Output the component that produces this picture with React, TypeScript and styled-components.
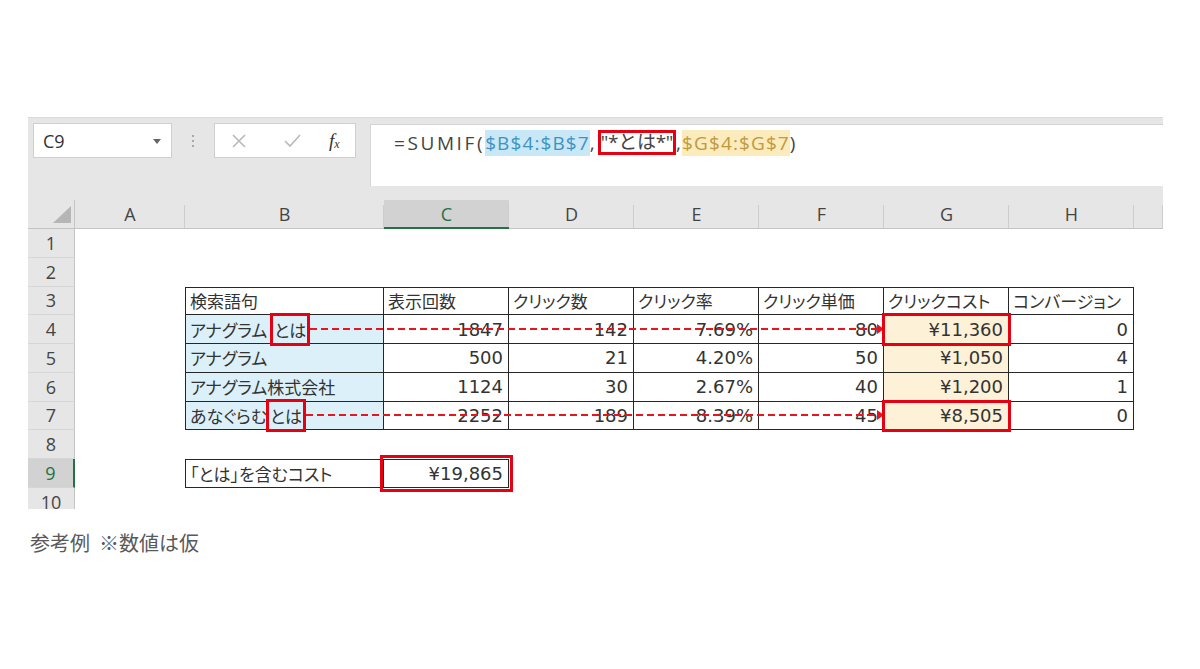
import React from 'react';
import styled, { createGlobalStyle, css } from 'styled-components';

// ページ全体の初期化
const GlobalStyle = createGlobalStyle`
  html, body {
    margin: 0;
    padding: 0;
    background: #fff;
  }
  body {
    font-family: "Open Sans", "Noto Sans CJK JP", sans-serif;
  }
`;

const Page = styled.div`
  width: 1200px;
  height: 669px;
  box-sizing: border-box;
  padding: 117px 0 0 28px;
  overflow: hidden;
`;

// Excelのスクリーンショット部分
const Excel = styled.div`
  width: 1135px;
  height: 392px;
  overflow: hidden;
  background: #e6e6e6;
  display: flex;
  flex-direction: column;
`;

const Toolbar = styled.div`
  height: 83px;
  flex: none;
  box-sizing: border-box;
  display: flex;
  align-items: flex-start;
  padding: 5px 0 0 5px;
  border-top: 1px solid #dadada;
`;

const NameBox = styled.div`
  position: relative;
  width: 139px;
  height: 35px;
  box-sizing: border-box;
  background: #fff;
  border: 1px solid #cfcfcf;
  display: flex;
  align-items: center;
  padding-left: 9px;
  font-size: 18px;
  color: #333;

  &::after {
    content: '';
    position: absolute;
    right: 10px;
    top: 15px;
    border-left: 4.5px solid transparent;
    border-right: 4.5px solid transparent;
    border-top: 5px solid #666;
  }
`;

const Grip = styled.div`
  width: 42px;
  height: 35px;
  display: flex;
  flex-direction: column;
  align-items: center;
  justify-content: center;
  gap: 3px;

  span {
    width: 2px;
    height: 2px;
    background: #a8a8a8;
  }
`;

const FxBox = styled.div`
  width: 142px;
  height: 35px;
  box-sizing: border-box;
  background: #fff;
  border: 1px solid #cfcfcf;
  display: flex;
  align-items: center;
  padding: 0 0 0 17px;
`;

const IconSlot = styled.div<{ $w: number }>`
  width: ${p => p.$w}px;
  display: flex;
  align-items: center;
`;

const FxMark = styled.span`
  font-family: "Liberation Serif", "DejaVu Serif", serif;
  font-style: italic;
  font-size: 19px;
  color: #333;

  sub {
    font-size: 12px;
    vertical-align: -1px;
  }
`;

const FormulaInput = styled.div`
  flex: 1;
  margin: 1px 0 0 14px;
  height: 62px;
  box-sizing: border-box;
  background: #fff;
  border-top: 1px solid #d4d4d4;
  border-left: 1px solid #d4d4d4;
  padding: 0 0 0 23px;
  font-size: 19px;
  letter-spacing: 1.1px;
  line-height: 36px;
  color: #444;
  white-space: nowrap;
`;

const FuncName = styled.span`
  letter-spacing: 2.6px;
`;

const Ref = styled.span<{ $tone: 'blue' | 'gold' }>`
  ${p =>
    p.$tone === 'blue'
      ? css`
          background: #c9e8f7;
          color: #3f93c2;
        `
      : css`
          background: #fcebbd;
          color: #bf9a3e;
        `}
`;

const Criteria = styled.span`
  display: inline-block;
  box-sizing: border-box;
  height: 25px;
  line-height: 19px;
  border: 3px solid #e50012;
  padding: 0;
  margin-left: 2px;
  vertical-align: 1px;
  letter-spacing: -0.3px;
`;

// シートのグリッド
const Sheet = styled.div`
  display: grid;
  grid-template-columns: 47px 110px 199px repeat(6, 125px) 29px;
  grid-template-rows: 29px repeat(10, 28.75px);
  background: #fff;
  flex: none;
`;

const Corner = styled.div`
  position: relative;
  background: #e6e6e6;
  border-right: 1px solid #c4c4c4;
  border-bottom: 1px solid #c4c4c4;

  &::after {
    content: '';
    position: absolute;
    right: 3px;
    bottom: 5px;
    border-left: 18px solid transparent;
    border-bottom: 17px solid #b6b6b6;
  }
`;

const ColHead = styled.div<{ $active?: boolean }>`
  position: relative;
  box-sizing: border-box;
  display: flex;
  align-items: center;
  justify-content: center;
  font-size: 18px;
  background: ${p => (p.$active ? '#d2d2d2' : '#e6e6e6')};
  color: ${p => (p.$active ? '#217346' : '#444')};
  border-bottom: ${p => (p.$active ? '2px solid #217346' : '1px solid #c4c4c4')};

  &::after {
    content: '';
    position: absolute;
    right: 0;
    top: 5px;
    bottom: 0;
    width: 1px;
    background: #cdcdcd;
  }
`;

const RowHead = styled.div<{ $active?: boolean }>`
  box-sizing: border-box;
  display: flex;
  align-items: center;
  justify-content: center;
  font-size: 18px;
  background: ${p => (p.$active ? '#d2d2d2' : '#e6e6e6')};
  color: ${p => (p.$active ? '#217346' : '#444')};
  border-right: ${p => (p.$active ? '2px solid #217346' : '1px solid #c4c4c4')};
  border-bottom: 1px solid #d6d6d6;
`;

type Tone = 'blue' | 'yellow';

const Cell = styled.div<{
  $framed?: boolean;
  $top?: boolean;
  $left?: boolean;
  $tone?: Tone;
  $num?: boolean;
  $mark?: number;
}>`
  box-sizing: border-box;
  display: flex;
  align-items: center;
  justify-content: ${p => (p.$num ? 'flex-end' : 'flex-start')};
  padding: ${p => (p.$num ? '0 5px 0 0' : '0 0 0 4px')};
  background: ${p => (p.$tone === 'blue' ? '#dcf0fa' : p.$tone === 'yellow' ? '#fdf1d8' : '#fff')};
  color: #333;
  font-family: ${p =>
    p.$num ? '"DejaVu Sans", "Noto Sans CJK JP", sans-serif' : '"Noto Sans CJK JP", sans-serif'};
  font-size: ${p => (p.$num ? '18px' : '17px')};
  font-feature-settings: "palt";
  white-space: nowrap;

  ${p =>
    p.$framed &&
    css`
      border-right: 1px solid #262626;
      border-bottom: 1px solid #262626;
    `}
  ${p => p.$top && css`border-top: 1px solid #262626;`}
  ${p => p.$left && css`border-left: 1px solid #262626;`}
  ${p =>
    p.$mark !== undefined &&
    css`
      position: relative;
      z-index: 3;
      outline: 3px solid #e50012;
      outline-offset: ${p.$mark}px;
    `}
`;

const Keyword = styled.span<{ $gap: number }>`
  display: inline-flex;
  align-items: center;
  box-sizing: border-box;
  height: 33px;
  margin-left: ${p => p.$gap}px;
  border: 3px solid #e50012;
  padding: 0 1px;
  position: relative;
  z-index: 3;
`;

// 「とは」から G列へ伸びる赤い破線
const Leader = styled.span`
  flex: 1;
  align-self: center;
  height: 2px;
  margin-right: -500px;
  position: relative;
  z-index: 2;
  background: repeating-linear-gradient(to right, #e8141e 0 7px, transparent 7px 11px);

  &::after {
    content: '';
    position: absolute;
    right: -1px;
    top: -4px;
    border-top: 5px solid transparent;
    border-bottom: 5px solid transparent;
    border-left: 7px solid #e8141e;
  }
`;

const Caption = styled.div`
  margin-top: 20px;
  padding-left: 2px;
  font-family: "Noto Sans CJK JP", sans-serif;
  font-size: 20px;
  line-height: 28px;
  color: #595959;
  white-space: pre;
`;

const COLS = ['A', 'B', 'C', 'D', 'E', 'F', 'G', 'H', ''];

type Row = [React.ReactNode, string, string, string, string, string, string];

const header: Row = ['検索語句', '表示回数', 'クリック数', 'クリック率', 'クリック単価', 'クリックコスト', 'コンバージョン'];

const body: { cells: Row; hit: boolean }[] = [
  { cells: ['アナグラム', '1847', '142', '7.69%', '80', '¥11,360', '0'], hit: true },
  { cells: ['アナグラム', '500', '21', '4.20%', '50', '¥1,050', '4'], hit: false },
  { cells: ['アナグラム株式会社', '1124', '30', '2.67%', '40', '¥1,200', '1'], hit: false },
  { cells: ['あなぐらむ', '2252', '189', '8.39%', '45', '¥8,505', '0'], hit: true },
];

const renderRow = (r: number) => {
  const out: React.ReactNode[] = [<RowHead key={`h${r}`} $active={r === 9}>{r}</RowHead>];
  COLS.forEach((_, c) => {
    const key = `${r}-${c}`;
    if (r === 3 && c >= 1 && c <= 7) {
      out.push(
        <Cell key={key} $framed $top $left={c === 1}>
          {header[c - 1]}
        </Cell>
      );
      return;
    }
    if (r >= 4 && r <= 7 && c >= 1 && c <= 7) {
      const row = body[r - 4];
      if (c === 1) {
        out.push(
          <Cell key={key} $framed $left $tone="blue" style={{ paddingRight: 0 }}>
            {row.cells[0]}
            {row.hit && (
              <>
                <Keyword $gap={r === 4 ? 3 : -1}>とは</Keyword>
                <Leader />
              </>
            )}
          </Cell>
        );
        return;
      }
      out.push(
        <Cell
          key={key}
          $framed
          $num
          $tone={c === 6 ? 'yellow' : undefined}
          $mark={c === 6 && row.hit ? -1 : undefined}
        >
          {row.cells[c - 1]}
        </Cell>
      );
      return;
    }
    if (r === 9 && c === 1) {
      out.push(
        <Cell key={key} $framed $top $left>
          「とは」を含むコスト
        </Cell>
      );
      return;
    }
    if (r === 9 && c === 2) {
      out.push(
        <Cell key={key} $framed $top $num $mark={1}>
          ¥19,865
        </Cell>
      );
      return;
    }
    out.push(<Cell key={key} />);
  });
  return out;
};

const App: React.FC = () => {
  return (
    <Page>
      <GlobalStyle />
      <Excel>
        <Toolbar>
          <NameBox>C9</NameBox>
          <Grip>
            <span />
            <span />
            <span />
          </Grip>
          <FxBox>
            <IconSlot $w={52}>
              <svg width="14" height="14" viewBox="0 0 14 14">
                <path d="M1 1 L13 13 M13 1 L1 13" stroke="#b9b9b9" strokeWidth="1.6" fill="none" />
              </svg>
            </IconSlot>
            <IconSlot $w={45}>
              <svg width="17" height="14" viewBox="0 0 17 14">
                <path d="M1 7 L6 12 L16 1" stroke="#b9b9b9" strokeWidth="1.6" fill="none" />
              </svg>
            </IconSlot>
            <FxMark>
              f<sub>x</sub>
            </FxMark>
          </FxBox>
          <FormulaInput>
            <FuncName>=SUMIF(</FuncName>
            <Ref $tone="blue">$B$4:$B$7</Ref>,<Criteria>"*とは*"</Criteria>,
            <Ref $tone="gold">$G$4:$G$7</Ref>)
          </FormulaInput>
        </Toolbar>
        <Sheet>
          <Corner />
          {COLS.map((c, i) => (
            <ColHead key={`c${i}`} $active={c === 'C'}>
              {c}
            </ColHead>
          ))}
          {Array.from({ length: 10 }, (_, i) => renderRow(i + 1))}
        </Sheet>
      </Excel>
      <Caption>{'参考例  ※数値は仮'}</Caption>
    </Page>
  );
};

export default App;
